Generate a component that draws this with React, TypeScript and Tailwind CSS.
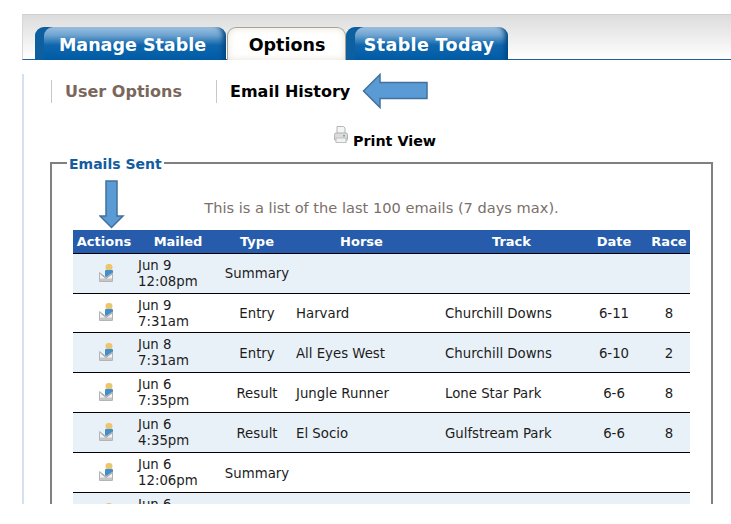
const FONT = "font-['DejaVu_Sans',Verdana,sans-serif]";

function MailIcon() {
  return (
    <svg width="15" height="19" viewBox="0 0 15 19" className="mx-auto block translate-x-[2px]">
      <rect x="6.5" y="0" width="7" height="6.5" rx="3" fill="#ecc66f" />
      <rect x="6" y="6" width="8" height="7" rx="1" fill="#3f8fce" />
      <path d="M0.5 8.5 L7 13.5 L13.5 9 V17.5 H0.5 Z" fill="#f3f3f3" stroke="#b4b4b4" strokeWidth="1" />
      <path d="M1 14.5 L7 14.5 L13 14.5 V17 H1 Z" fill="#c6c6c6" />
      <path d="M1.5 10 L7 14.5 L13 10" fill="none" stroke="#a0a0a0" strokeWidth="1" />
    </svg>
  );
}

function PrintIcon() {
  return (
    <svg width="14" height="18" viewBox="0 0 14 18">
      <path d="M3 0.5 H9.5 L11 2 V8 H3 Z" fill="#f4f4f4" stroke="#b5b5b5" />
      <rect x="0.5" y="7" width="13" height="7.5" rx="1.5" fill="#dcdcdc" stroke="#b0b0b0" />
      <rect x="2" y="12" width="10" height="4.5" fill="#f2f2f2" stroke="#c0c0c0" />
      <rect x="9" y="9" width="2" height="1.5" fill="#6fae7d" />
    </svg>
  );
}

type Row = { d: string; t: string; type: string; horse?: string; track?: string; date?: string; race?: string };
const rows: Row[] = [
  { d: "Jun 9", t: "12:08pm", type: "Summary" },
  { d: "Jun 9", t: "7:31am", type: "Entry", horse: "Harvard", track: "Churchill Downs", date: "6-11", race: "8" },
  { d: "Jun 8", t: "7:31am", type: "Entry", horse: "All Eyes West", track: "Churchill Downs", date: "6-10", race: "2" },
  { d: "Jun 6", t: "7:35pm", type: "Result", horse: "Jungle Runner", track: "Lone Star Park", date: "6-6", race: "8" },
  { d: "Jun 6", t: "4:35pm", type: "Result", horse: "El Socio", track: "Gulfstream Park", date: "6-6", race: "8" },
  { d: "Jun 6", t: "12:06pm", type: "Summary" },
  { d: "Jun 6", t: "7:31am", type: "Entry", horse: "Harvard", track: "Churchill Downs", date: "6-6", race: "8" },
];

const blueTab =
  "h-[33px] -mb-px rounded-t-[9px] bg-[linear-gradient(to_bottom,#9cc0e0_0%,#6ea3d0_25%,#0f66ad_55%,#005ca6_100%)] shadow-[inset_-7px_0_5px_-4px_#00467f,inset_9px_0_0_0_#0d5f9f] text-white font-bold text-[17.5px] leading-[36px] text-center";

export default function App() {
  return (
    <div className={`${FONT} relative w-[731px] h-[524px] overflow-hidden bg-white text-black`}>
      <div className="h-[504px] overflow-hidden pt-[14px]">
        <div className="ml-[22px] h-[46px] flex items-end pl-[12px] border-t border-[#cfcfcf] border-b border-b-[#1f5f9e] bg-[linear-gradient(to_bottom,#dcdcdc,#ffffff)] border-l border-l-[#d8d8d8]">
          <div className={`${blueTab} w-[191px] pl-[4px]`}>Manage Stable</div>
          <div className="ml-px -mb-px w-[119px] h-[33px] pl-px rounded-t-[9px] border border-b-0 border-[#a9a296] bg-white shadow-[inset_0_0_7px_#e5e1d5] font-bold text-[17.5px] leading-[35px] text-center">
            Options
          </div>
          <div className={`${blueTab} w-[162px] pl-[4px] tracking-[0.35px]`}>Stable Today</div>
        </div>

        <div className="ml-[22px] mt-[14px] pt-[5px] border-l-2 border-[#d5e1ef] h-[440px] pl-[27px]">
          <div className="flex items-center h-[24px]">
            <div className="w-[165px] h-[23px] border-l border-[#c8c8c8] pl-[13px] font-bold text-[16px] leading-[23px] text-[#7a675c]">
              User Options
            </div>
            <div className="h-[23px] border-l border-[#c8c8c8] pl-[13px] font-bold text-[16px] leading-[23px] text-black">
              Email History
            </div>
          </div>

          <div className="mt-[23px] h-[24px] ml-[283px] flex items-start gap-[5px]">
            <PrintIcon />
            <span className="font-bold text-[14.3px] leading-[18px] mt-[6px]">Print View</span>
          </div>

          <fieldset className="w-[663px] -ml-px mt-[2px] border-2 border-[#808080] pl-[21px] pr-[21px] pb-0 h-[400px]">
            <legend className="-ml-[6px] px-[2px] pt-[4px] font-bold text-[14px] leading-[17px] text-[#135d9e]">Emails Sent</legend>
            <p className="mt-[26px] h-[22px] text-center text-[14.6px] leading-[18px] text-[#7a6f6a]">
              This is a list of the last 100 emails (7 days max).
            </p>
            <table className="w-[617px] table-fixed border-collapse text-[13.3px] text-[#1c1c1c] mt-[9px]">
              <colgroup>
                <col className="w-[62px]" />
                <col className="w-[86px]" />
                <col className="w-[72px]" />
                <col className="w-[149px]" />
                <col className="w-[143px]" />
                <col className="w-[58px]" />
                <col className="w-[47px]" />
              </colgroup>
              <thead>
                <tr className="h-[23px] bg-[#265cab] text-white font-bold border-b border-black text-[13px]">
                  <th className="font-bold">Actions</th>
                  <th className="font-bold">Mailed</th>
                  <th className="font-bold">Type</th>
                  <th className="font-bold pr-[12px]">Horse</th>
                  <th className="font-bold pr-[4px]">Track</th>
                  <th className="font-bold">Date</th>
                  <th className="font-bold pl-[5px]">Race</th>
                </tr>
              </thead>
              <tbody>
                {rows.map((r, i) => {
                  const pad = i >= 2 ? "pt-[4px]" : "pt-[2px]";
                  return (
                    <tr key={i} className={`border-b border-black ${i === 1 ? "h-[39px]" : "h-[40px]"} ${i % 2 === 0 ? "bg-[#e9f1f8]" : "bg-white"}`}>
                      <td><MailIcon /></td>
                      <td className="pl-[3px] pt-[2px] leading-[16px]">{r.d}<br />{r.t}</td>
                      <td className={`${pad} text-center`}>{r.type}</td>
                      <td className={`${pad} pl-[3px]`}>{r.horse}</td>
                      <td className={`${pad} pl-[3px]`}>{r.track}</td>
                      <td className={`${pad} text-center`}>{r.date}</td>
                      <td className={`${pad} pl-[5px] text-center`}>{r.race}</td>
                    </tr>
                  );
                })}
              </tbody>
            </table>
          </fieldset>
        </div>
      </div>

      <svg className="absolute left-[362px] top-[73px]" width="67" height="36" viewBox="0 0 67 36">
        <path d="M1.5 18 L18 1.5 V9.5 H65 V25.5 H18 V34.5 Z" fill="#5b9bd5" stroke="#41719c" strokeWidth="1.5" />
      </svg>
      <svg className="absolute left-[99px] top-[180px]" width="26" height="49" viewBox="0 0 26 49">
        <path d="M7 1 H18 V36 H24 L12.5 47.5 L1 36 H7 Z" fill="#5b9bd5" stroke="#41719c" strokeWidth="1.5" />
      </svg>
    </div>
  );
}
